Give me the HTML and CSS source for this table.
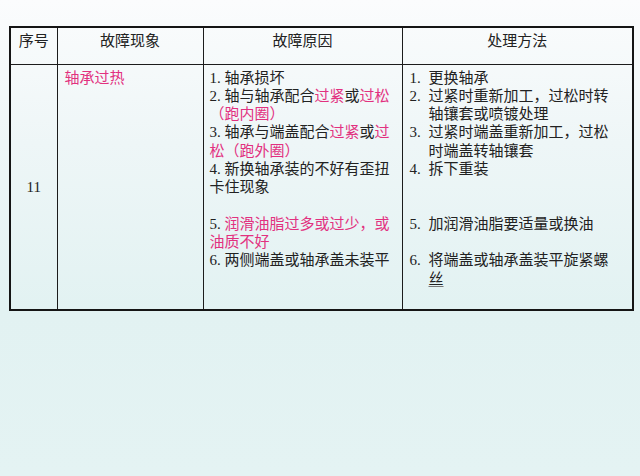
FILE: index.html
```html
<!DOCTYPE html>
<html lang="zh-CN">
<head>
<meta charset="utf-8">
<title>轴承过热</title>
<link rel="stylesheet" href="styles.css">
</head>
<body>
<div class="page">
  <table class="fault-table">
    <colgroup>
      <col class="c-no">
      <col class="c-sym">
      <col class="c-cause">
      <col class="c-fix">
    </colgroup>
    <thead>
      <tr>
        <th>序号</th>
        <th>故障现象</th>
        <th>故障原因</th>
        <th>处理方法</th>
      </tr>
    </thead>
    <tbody>
      <tr>
        <td class="no">11</td>
        <td class="sym"><span class="hl">轴承过热</span></td>
        <td class="cause">
          <div>1. 轴承损坏</div>
          <div>2. 轴与轴承配合<span class="hl">过紧</span>或<span class="hl">过松</span><br><span class="hl">（跑内圈）</span></div>
          <div>3. 轴承与端盖配合<span class="hl">过紧</span>或<span class="hl">过</span><br><span class="hl">松（跑外圈）</span></div>
          <div>4. 新换轴承装的不好有歪扭<br>卡住现象</div>
          <div class="gap1">5. <span class="hl">润滑油脂过多或过少，或<br>油质不好</span></div>
          <div>6. 两侧端盖或轴承盖未装平</div>
        </td>
        <td class="fix">
          <div class="item"><span class="n">1.</span><span class="t">更换轴承</span></div>
          <div class="item"><span class="n">2.</span><span class="t">过紧时重新加工，过松时转<br>轴镶套或喷镀处理</span></div>
          <div class="item"><span class="n">3.</span><span class="t">过紧时端盖重新加工，过松<br>时端盖转轴镶套</span></div>
          <div class="item"><span class="n">4.</span><span class="t">拆下重装</span></div>
          <div class="item gap2"><span class="n">5.</span><span class="t">加润滑油脂要适量或换油</span></div>
          <div class="item gap1"><span class="n">6.</span><span class="t">将端盖或轴承盖装平旋紧螺<br><span class="ul">丝</span></span></div>
        </td>
      </tr>
    </tbody>
  </table>
</div>
</body>
</html>
```

FILE: styles.css
```css
html, body {
  margin: 0;
  padding: 0;
}
body {
  width: 640px;
  height: 476px;
  background: linear-gradient(to bottom, #fbfcfd 0%, #eef6f7 30%, #e2f2f2 65%, #e4f3f3 100%);
  font-family: "Liberation Serif", "Noto Sans CJK SC", serif;
  font-size: 15px;
  color: #222;
  overflow: hidden;
}
.page {
  padding: 26px 0 0 9px;
}
.fault-table {
  border-collapse: collapse;
  table-layout: fixed;
  width: 623px;
  border: 2px solid #151515;
}
.c-no { width: 47px; }
.c-sym { width: 146px; }
.c-cause { width: 199px; }
.c-fix { width: 231px; }

.fault-table th,
.fault-table td {
  border: 1.5px solid #1c1c1c;
  padding: 0;
  line-height: 18.3px;
  vertical-align: top;
  font-weight: normal;
}
.fault-table th {
  height: 37px;
  box-sizing: border-box;
  padding-top: 4px;
  text-align: center;
}
.fault-table td {
  height: 246px;
  box-sizing: border-box;
  padding-top: 4px;
}
.fault-table td.no {
  vertical-align: middle;
  text-align: center;
  padding-top: 0;
}
.sym { padding-left: 7px !important; }
.cause { padding-left: 6px !important; }
.fix { padding-left: 7px !important; }

.hl { color: #e2317f; }
.ul {
  text-decoration: underline;
  text-decoration-color: #777;
  text-underline-offset: 2px;
}

.gap1 { margin-top: 18.3px; }
.gap2 { margin-top: 36.6px; }

.item {
  display: flex;
}
.item .n {
  width: 19px;
  flex: none;
}
.item .t {
  flex: 1;
}
```
